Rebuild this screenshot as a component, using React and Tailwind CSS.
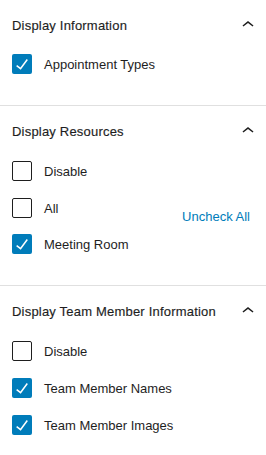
import React from "react";

const font = { fontFamily: '"Liberation Sans", Arial, sans-serif' };

function Chevron() {
  return (
    <svg width="24" height="24" viewBox="0 0 24 24" className="shrink-0 fill-[#1e1e1e]">
      <path d="M6.5 12.4L12 8l5.5 4.4-.9 1.2L12 10l-4.6 3.6-.9-1.2z" />
    </svg>
  );
}

function Box({ checked }) {
  return checked ? (
    <span className="flex h-5 w-5 shrink-0 items-center justify-center rounded-[2px] bg-[#007cba]">
      <svg width="20" height="20" viewBox="2 2 20 20" className="fill-white">
        <path d="M16.7 7.1l-6.3 8.5-3.3-2.5-.9 1.2 4.5 3.4L17.9 8z" />
      </svg>
    </span>
  ) : (
    <span className="block h-5 w-5 shrink-0 rounded-[2px] border border-[#1e1e1e] bg-white" />
  );
}

function Row({ label, checked, extra }) {
  return (
    <div className="flex h-5 items-center">
      <Box checked={checked} />
      <span className="ml-3 pt-[2px] text-[13px] leading-5 text-[#1e1e1e]">{label}</span>
      {extra}
    </div>
  );
}

function Section({ title, first, children }) {
  return (
    <div className={first ? "" : "border-t border-[#e0e0e0]"}>
      <div className={`flex items-center justify-between pl-3 pr-[6px] ${first ? "h-[49px]" : "h-[50px]"}`}>
        <span className="pt-[2px] text-[13px] leading-5 tracking-[0.2px] text-[#1e1e1e] [-webkit-text-stroke:0.15px_#1e1e1e]">
          {title}
        </span>
        <Chevron />
      </div>
      <div className="flex flex-col gap-[16.67px] px-3 pt-[5px] pb-[31px]">{children}</div>
    </div>
  );
}

export default function App() {
  return (
    <div className="w-[266px] bg-white" style={font}>
      <Section title="Display Information" first>
        <Row label="Appointment Types" checked />
      </Section>
      <Section title="Display Resources">
        <Row label="Disable" />
        <Row
          label="All"
          extra={
            <span className="ml-auto translate-y-[9px] pr-1 text-[13px] leading-5 text-[#007cba]">
              Uncheck All
            </span>
          }
        />
        <Row label="Meeting Room" checked />
      </Section>
      <Section title="Display Team Member Information">
        <Row label="Disable" />
        <Row label="Team Member Names" checked />
        <Row label="Team Member Images" checked />
      </Section>
    </div>
  );
}
